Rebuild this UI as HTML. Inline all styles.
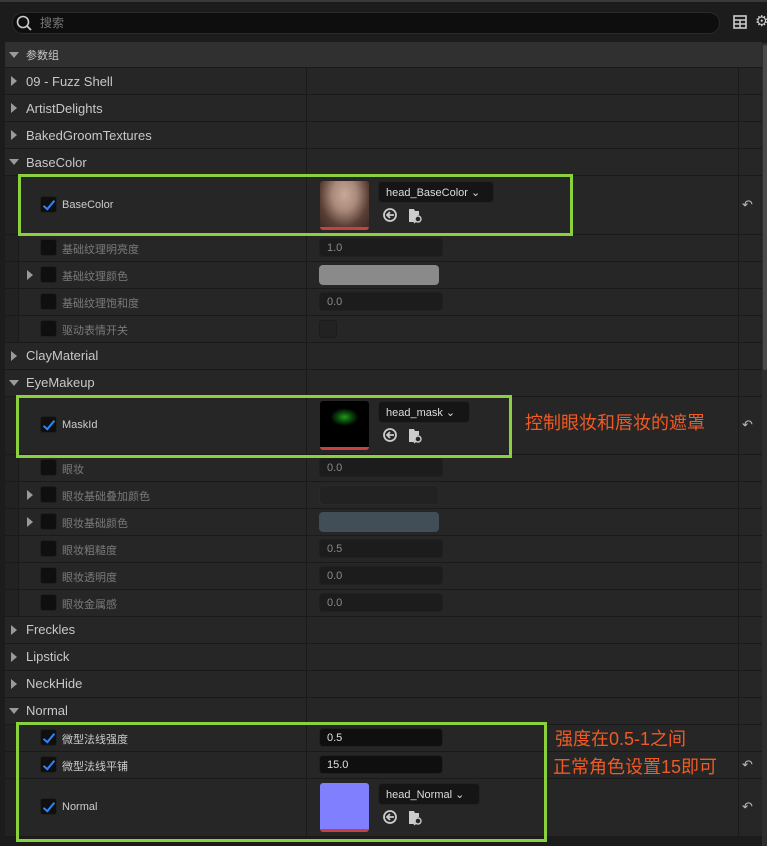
<!DOCTYPE html><html><head><meta charset="utf-8"><style>
*{margin:0;padding:0;box-sizing:border-box}
body{width:767px;height:846px;background:#1c1c1c;font-family:"Liberation Sans","Noto Sans CJK SC",sans-serif;overflow:hidden;position:relative;color:#c8c8c8}
.a{position:absolute}
.row{position:absolute;left:5px;width:757px;background:#262626;border-bottom:1px solid #1a1a1a}
.row .c1{position:absolute;left:301px;top:0;bottom:0;border-left:1px solid #1a1a1a}
.row .c2{position:absolute;left:733px;top:0;bottom:0;border-left:1px solid #1a1a1a}
.sub{background:#262626}
.sub .ind{position:absolute;left:0;top:0;bottom:0;width:14px;background:#222;border-right:1px solid #1a1a1a}
.tri-r{position:absolute;width:0;height:0;border-left:6px solid #9a9a9a;border-top:5px solid transparent;border-bottom:5px solid transparent}
.tri-d{position:absolute;width:0;height:0;border-top:6px solid #9a9a9a;border-left:5px solid transparent;border-right:5px solid transparent}
.lbl{position:absolute;font-size:13px;color:#c8c8c8}
.sl{position:absolute;font-size:11px;color:#7a7a7a}
.cb{position:absolute;width:17px;height:17px;background:#0f0f0f;border-radius:3px;border:1px solid #1f1f1f}
.cb.on::after{content:"";position:absolute;left:5px;top:1px;width:4px;height:10px;border-right:2px solid #2a86ff;border-bottom:2px solid #2a86ff;transform:rotate(40deg)}
.inp{position:absolute;height:19px;background:#1c1c1c;border:1px solid #202020;border-radius:4px;font-size:11px;color:#8a8a8a;padding:3px 7px 0}
.inp.w{background:#0f0f0f;color:#e0e0e0}
.green{position:absolute;border:3px solid #8ad13d}
.dd{position:absolute;height:22px;background:#151515;border:1px solid #222;border-radius:4px;font-size:11px;color:#ddd;padding:4px 7px}
.thumb{position:absolute;width:49px;height:49px;border-radius:3px;border-bottom:3px solid #c84040}
.ann{position:absolute;color:#f05a24;font-size:18px}
.undo{position:absolute;font-size:13px;color:#bbb}
</style></head><body>
<svg width="0" height="0" style="position:absolute"><defs>
<g id="ic"><circle cx="7" cy="8" r="6" fill="none" stroke="#ccc" stroke-width="1.8"/><path d="M11 8H4M7 5L4 8L7 11" fill="none" stroke="#ccc" stroke-width="1.8"/>
<path d="M26 2h5l1 2h4v4a5 5 0 0 0-4 7h-6z" fill="#ccc"/><circle cx="35" cy="12" r="3" fill="none" stroke="#ccc" stroke-width="1.4"/><line x1="33" y1="14" x2="31" y2="16" stroke="#ccc" stroke-width="1.4"/></g>
</defs></svg>
<div class="a" style="left:0;top:0;width:767px;height:2px;background:#3a3a3a"></div>
<div class="a" style="left:12px;top:12px;width:708px;height:22px;background:#0e0e0e;border:1px solid #2a2a2a;border-radius:11px"></div>
<svg class="a" style="left:15px;top:14px" width="18" height="18"><circle cx="8" cy="8" r="5.5" fill="none" stroke="#ccc" stroke-width="1.6"/><line x1="12" y1="12" x2="16" y2="16" stroke="#ccc" stroke-width="1.8"/></svg>
<div class="a" style="left:40px;top:14px;font-size:12px;color:#777">搜索</div>
<svg class="a" style="left:733px;top:15px" width="14" height="14"><rect x="1" y="1" width="12" height="12" fill="none" stroke="#ccc" stroke-width="1.6"/><line x1="1" y1="5" x2="13" y2="5" stroke="#ccc" stroke-width="1.5"/><line x1="1" y1="9" x2="13" y2="9" stroke="#ccc" stroke-width="1.5"/><line x1="7" y1="5" x2="7" y2="13" stroke="#ccc" stroke-width="1.5"/></svg>
<div class="a" style="left:755px;top:12px;font-size:15px;color:#ccc">⚙</div>
<div class="a" style="left:762px;top:43px;width:5px;height:803px;background:#2e2e2e"></div>
<div class="a" style="left:763px;top:45px;width:4px;height:325px;background:#4a4a4a;border-radius:2px"></div>

<div class="a" style="left:5px;top:42px;width:757px;height:26px;background:#303030;border-bottom:1px solid #1a1a1a"></div>
<div class="tri-d" style="left:9px;top:52px"></div>
<div class="a" style="left:26px;top:47px;font-size:11px;color:#c8c8c8">参数组</div>

<div class="row" style="top:68px;height:27px"><div class="c1"></div><div class="c2"></div></div>
<div class="tri-r" style="left:11px;top:76px"></div><div class="lbl" style="left:26px;top:74px">09 - Fuzz Shell</div>
<div class="row" style="top:95px;height:27px"><div class="c1"></div><div class="c2"></div></div>
<div class="tri-r" style="left:11px;top:103px"></div><div class="lbl" style="left:26px;top:101px">ArtistDelights</div>
<div class="row" style="top:122px;height:27px"><div class="c1"></div><div class="c2"></div></div>
<div class="tri-r" style="left:11px;top:130px"></div><div class="lbl" style="left:26px;top:128px">BakedGroomTextures</div>
<div class="row" style="top:149px;height:27px"><div class="c1"></div><div class="c2"></div></div>
<div class="tri-d" style="left:9px;top:159px"></div><div class="lbl" style="left:26px;top:155px">BaseColor</div>

<div class="row sub" style="top:176px;height:59px"><div class="ind"></div><div class="c1"></div><div class="c2"></div></div>
<div class="cb on" style="left:40px;top:196px"></div><div class="a" style="left:62px;top:199px;font-size:11px;color:#ccc">BaseColor</div>
<div class="thumb" style="left:320px;top:181px;background:radial-gradient(ellipse at 50% 30%,#c9a898 0,#a88a7c 35%,#5a3e34 70%,#3a2a24 100%)"></div>
<div class="dd" style="left:378px;top:181px;width:116px">head_BaseColor ⌄</div>
<svg class="a" style="left:383px;top:207px" width="40" height="18"><use href="#ic"/></svg>
<div class="undo" style="left:742px;top:197px">↶</div>

<div class="row sub" style="top:235px;height:27px"><div class="ind"></div><div class="c1"></div><div class="c2"></div></div>
<div class="cb" style="left:40px;top:239px"></div><div class="sl" style="left:62px;top:241px">基础纹理明亮度</div><div class="inp" style="left:319px;top:238px;width:124px">1.0</div>
<div class="row sub" style="top:262px;height:27px"><div class="ind"></div><div class="c1"></div><div class="c2"></div></div>
<div class="tri-r" style="left:27px;top:270px"></div><div class="cb" style="left:40px;top:266px"></div><div class="sl" style="left:62px;top:268px">基础纹理颜色</div><div class="a" style="left:319px;top:265px;width:120px;height:20px;background:#8a8a8a;border-radius:4px"></div>
<div class="row sub" style="top:289px;height:27px"><div class="ind"></div><div class="c1"></div><div class="c2"></div></div>
<div class="cb" style="left:40px;top:293px"></div><div class="sl" style="left:62px;top:295px">基础纹理饱和度</div><div class="inp" style="left:319px;top:292px;width:124px">0.0</div>
<div class="row sub" style="top:316px;height:27px"><div class="ind"></div><div class="c1"></div><div class="c2"></div></div>
<div class="cb" style="left:40px;top:320px"></div><div class="sl" style="left:62px;top:322px">驱动表情开关</div><div class="a" style="left:319px;top:320px;width:18px;height:18px;background:#222;border:1px solid #1c1c1c;border-radius:3px"></div>

<div class="row" style="top:343px;height:27px"><div class="c1"></div><div class="c2"></div></div>
<div class="tri-r" style="left:11px;top:351px"></div><div class="lbl" style="left:26px;top:348px">ClayMaterial</div>
<div class="row" style="top:370px;height:27px"><div class="c1"></div><div class="c2"></div></div>
<div class="tri-d" style="left:9px;top:380px"></div><div class="lbl" style="left:26px;top:375px">EyeMakeup</div>

<div class="row sub" style="top:397px;height:58px"><div class="ind"></div><div class="c1"></div><div class="c2"></div></div>
<div class="cb on" style="left:40px;top:416px"></div><div class="a" style="left:62px;top:419px;font-size:11px;color:#ccc">MaskId</div>
<div class="thumb" style="left:320px;top:401px;background:radial-gradient(ellipse 14px 9px at 50% 35%,#1f9a1f 0,#0a4a0a 50%,#000 100%)"></div>
<div class="dd" style="left:378px;top:401px;width:92px">head_mask ⌄</div>
<svg class="a" style="left:383px;top:427px" width="40" height="18"><use href="#ic"/></svg>
<div class="undo" style="left:742px;top:417px">↶</div>
<div class="ann" style="left:525px;top:409px">控制眼妆和唇妆的遮罩</div>

<div class="row sub" style="top:455px;height:27px"><div class="ind"></div><div class="c1"></div><div class="c2"></div></div>
<div class="cb" style="left:40px;top:459px"></div><div class="sl" style="left:62px;top:461px">眼妆</div><div class="inp" style="left:319px;top:458px;width:124px">0.0</div>
<div class="row sub" style="top:482px;height:27px"><div class="ind"></div><div class="c1"></div><div class="c2"></div></div>
<div class="tri-r" style="left:27px;top:490px"></div><div class="cb" style="left:40px;top:486px"></div><div class="sl" style="left:62px;top:488px">眼妆基础叠加颜色</div><div class="a" style="left:319px;top:485px;width:120px;height:20px;background:#222;border:1px solid #2a2a2a;border-radius:4px"></div>
<div class="row sub" style="top:509px;height:27px"><div class="ind"></div><div class="c1"></div><div class="c2"></div></div>
<div class="tri-r" style="left:27px;top:517px"></div><div class="cb" style="left:40px;top:513px"></div><div class="sl" style="left:62px;top:515px">眼妆基础颜色</div><div class="a" style="left:319px;top:512px;width:120px;height:20px;background:#414d57;border-radius:4px"></div>
<div class="row sub" style="top:536px;height:27px"><div class="ind"></div><div class="c1"></div><div class="c2"></div></div>
<div class="cb" style="left:40px;top:540px"></div><div class="sl" style="left:62px;top:542px">眼妆粗糙度</div><div class="inp" style="left:319px;top:539px;width:124px">0.5</div>
<div class="row sub" style="top:563px;height:27px"><div class="ind"></div><div class="c1"></div><div class="c2"></div></div>
<div class="cb" style="left:40px;top:567px"></div><div class="sl" style="left:62px;top:569px">眼妆透明度</div><div class="inp" style="left:319px;top:566px;width:124px">0.0</div>
<div class="row sub" style="top:590px;height:27px"><div class="ind"></div><div class="c1"></div><div class="c2"></div></div>
<div class="cb" style="left:40px;top:594px"></div><div class="sl" style="left:62px;top:596px">眼妆金属感</div><div class="inp" style="left:319px;top:593px;width:124px">0.0</div>

<div class="row" style="top:617px;height:27px"><div class="c1"></div><div class="c2"></div></div>
<div class="tri-r" style="left:11px;top:625px"></div><div class="lbl" style="left:26px;top:622px">Freckles</div>
<div class="row" style="top:644px;height:27px"><div class="c1"></div><div class="c2"></div></div>
<div class="tri-r" style="left:11px;top:652px"></div><div class="lbl" style="left:26px;top:649px">Lipstick</div>
<div class="row" style="top:671px;height:27px"><div class="c1"></div><div class="c2"></div></div>
<div class="tri-r" style="left:11px;top:679px"></div><div class="lbl" style="left:26px;top:676px">NeckHide</div>
<div class="row" style="top:698px;height:27px"><div class="c1"></div><div class="c2"></div></div>
<div class="tri-d" style="left:9px;top:708px"></div><div class="lbl" style="left:26px;top:703px">Normal</div>

<div class="row sub" style="top:725px;height:27px"><div class="ind"></div><div class="c1"></div><div class="c2"></div></div>
<div class="cb on" style="left:40px;top:729px"></div><div class="a" style="left:62px;top:731px;font-size:11px;color:#ccc">微型法线强度</div><div class="inp w" style="left:319px;top:728px;width:124px">0.5</div>
<div class="row sub" style="top:752px;height:27px"><div class="ind"></div><div class="c1"></div><div class="c2"></div></div>
<div class="cb on" style="left:40px;top:756px"></div><div class="a" style="left:62px;top:758px;font-size:11px;color:#ccc">微型法线平铺</div><div class="inp w" style="left:319px;top:755px;width:124px">15.0</div>
<div class="undo" style="left:742px;top:757px">↶</div>
<div class="row sub" style="top:779px;height:58px"><div class="ind"></div><div class="c1"></div><div class="c2"></div></div>
<div class="cb on" style="left:40px;top:798px"></div><div class="a" style="left:62px;top:801px;font-size:11px;color:#ccc">Normal</div>
<div class="thumb" style="left:320px;top:783px;background:#8080ff"></div>
<div class="dd" style="left:378px;top:783px;width:102px">head_Normal ⌄</div>
<svg class="a" style="left:383px;top:809px" width="40" height="18"><use href="#ic"/></svg>
<div class="undo" style="left:742px;top:799px">↶</div>
<div class="ann" style="left:555px;top:725px">强度在0.5-1之间</div>
<div class="ann" style="left:553px;top:753px">正常角色设置15即可</div>

<div class="green" style="left:18px;top:174px;width:555px;height:62px"></div>
<div class="green" style="left:16px;top:395px;width:496px;height:63px"></div>
<div class="green" style="left:16px;top:722px;width:531px;height:120px"></div>
</body></html>
